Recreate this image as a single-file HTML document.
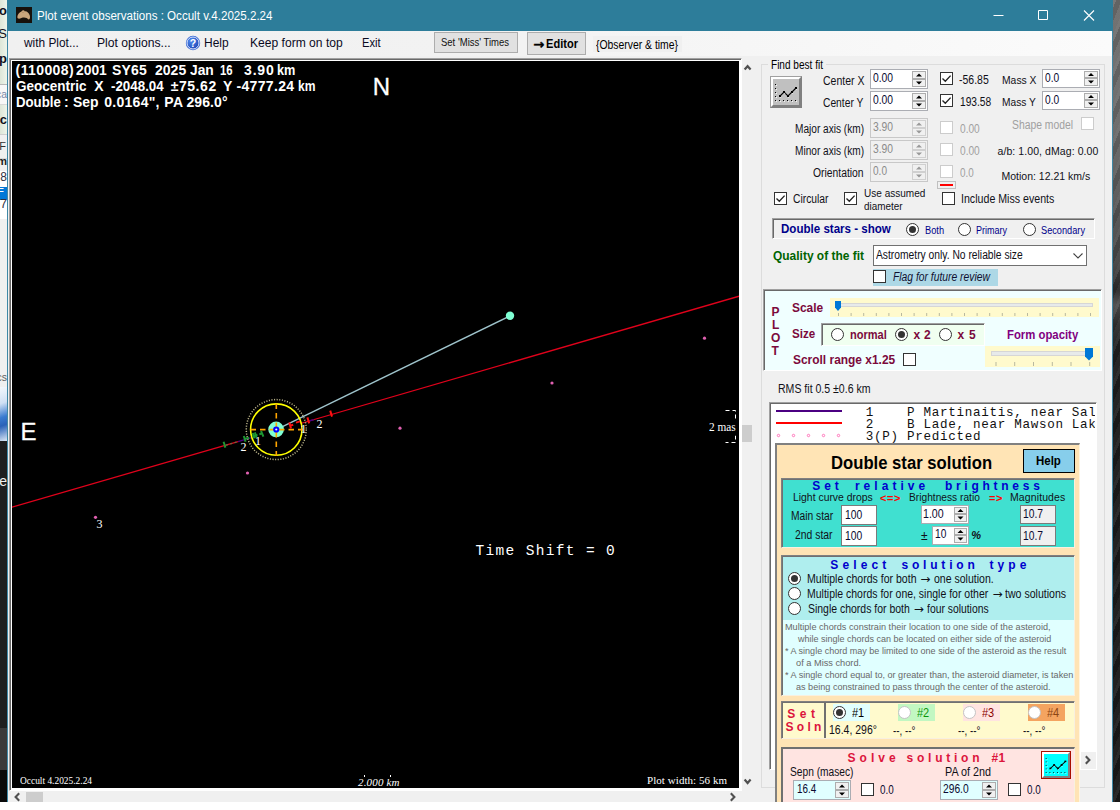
<!DOCTYPE html>
<html lang="en"><head><meta charset="utf-8"><title>Plot event observations : Occult v.4.2025.2.24</title>
<style>
html,body{margin:0;padding:0;}
body{width:1120px;height:810px;position:relative;overflow:hidden;background:#fff;font-family:"Liberation Sans", sans-serif;}
div{position:absolute;box-sizing:border-box;}
svg{position:absolute;overflow:visible;}
.t{position:absolute;white-space:pre;line-height:normal;transform-origin:0 0;}

.cb{width:13px;height:13px;background:#fff;border:1px solid #333;}
.cb.dis{border-color:#ccc;}
.rb.dis{border-color:#c4c4c4;}
.rb{width:13px;height:13px;background:#fff;border:1px solid #333;border-radius:50%;}
.rb.on::after{content:"";position:absolute;left:2px;top:2px;width:7px;height:7px;border-radius:50%;background:#333;}
.nud{background:#fff;border:1px solid #abadb3;}
.nud.dis{background:#f0f0f0;border-color:#c8c8c8;}
.spin{width:14px;background:#f0f0f0;border:1px solid #adadad;}
.spin.dis{border-color:#d0d0d0;}

</style></head><body>
<div style="left:0px;top:0px;width:7px;height:84px;background:linear-gradient(90deg,#dde6d8 0,#eef4ea 100%);"></div>
<div style="left:0px;top:84px;width:7px;height:21px;background:#f7f7f7;border-top:1px solid #b8b8b8;border-bottom:1px solid #d8d8d8;"></div>
<div style="left:0px;top:105px;width:7px;height:29px;background:linear-gradient(90deg,#dde6d8 0,#eef4ea 100%);"></div>
<div style="left:0px;top:134px;width:7px;height:24px;background:#f0f0f0;border-top:1px solid #cfcfcf;"></div>
<div style="left:0px;top:158px;width:7px;height:13px;background:#f0f0f0;border-top:1px solid #d8d8d8;"></div>
<div style="left:0px;top:171px;width:7px;height:48px;background:#ffffff;"></div>
<div style="left:0px;top:187px;width:7px;height:13px;background:#0078d7;"></div>
<div style="left:0px;top:219px;width:7px;height:168px;background:#f0f0f0;"></div>
<div style="left:0px;top:387px;width:7px;height:54px;background:linear-gradient(160deg,#f4f8fc 0,#cfe0f4 30%,#3a7bd0 55%,#2a62b8 70%,#dce8f6 100%);"></div>
<div style="left:0px;top:441px;width:7px;height:287px;background:#1f1f1f;"></div>
<div style="left:0px;top:728px;width:7px;height:42px;background:#3a3a3a;"></div>
<div style="left:0px;top:770px;width:7px;height:32px;background:#0a0a0a;"></div>
<div style="left:0;top:2.5px;width:7px;height:20px;overflow:hidden"><span style="position:absolute;right:0px;top:0;line-height:20px;white-space:pre;font:bold 13px 'Liberation Sans',sans-serif;color:#101020">to</span></div>
<div style="left:0;top:25.5px;width:7px;height:20px;overflow:hidden"><span style="position:absolute;right:0px;top:0;line-height:20px;white-space:pre;font:normal 13px 'Liberation Sans',sans-serif;color:#101020">S</span></div>
<div style="left:0;top:51px;width:7px;height:20px;overflow:hidden"><span style="position:absolute;right:0px;top:0;line-height:20px;white-space:pre;font:bold 13px 'Liberation Sans',sans-serif;color:#101020">sp</span></div>
<div style="left:0;top:87.5px;width:7px;height:20px;overflow:hidden"><span style="position:absolute;right:0px;top:0;line-height:20px;white-space:pre;font:normal 10.5px 'Liberation Sans',sans-serif;color:#7a8aa8">ca</span></div>
<div style="left:0;top:112px;width:7px;height:20px;overflow:hidden"><span style="position:absolute;right:0px;top:0;line-height:20px;white-space:pre;font:bold 13px 'Liberation Sans',sans-serif;color:#101020">sc</span></div>
<div style="left:0;top:139.5px;width:7px;height:20px;overflow:hidden"><span style="position:absolute;right:1px;top:0;line-height:20px;white-space:pre;font:normal 11px 'Liberation Sans',sans-serif;color:#303030">F</span></div>
<div style="left:0;top:154.5px;width:7px;height:20px;overflow:hidden"><span style="position:absolute;right:0px;top:0;line-height:20px;white-space:pre;font:bold 11px 'Liberation Sans',sans-serif;color:#202020">m</span></div>
<div style="left:0;top:169.5px;width:7px;height:20px;overflow:hidden"><span style="position:absolute;right:0px;top:0;line-height:20px;white-space:pre;font:normal 12px 'Liberation Sans',sans-serif;color:#303040">.8</span></div>
<div style="left:0;top:183.5px;width:7px;height:20px;overflow:hidden"><span style="position:absolute;right:3px;top:0;line-height:20px;white-space:pre;font:normal 11px 'Liberation Sans',sans-serif;color:#ffffff">=</span></div>
<div style="left:0;top:197px;width:7px;height:20px;overflow:hidden"><span style="position:absolute;right:0px;top:0;line-height:20px;white-space:pre;font:normal 12px 'Liberation Sans',sans-serif;color:#303040">.7</span></div>
<div style="left:0;top:370.5px;width:7px;height:20px;overflow:hidden"><span style="position:absolute;right:0px;top:0;line-height:20px;white-space:pre;font:normal 10.5px 'Liberation Sans',sans-serif;color:#606060">cs</span></div>
<div style="left:0;top:473px;width:7px;height:20px;overflow:hidden"><span style="position:absolute;right:0px;top:0;line-height:20px;white-space:pre;font:normal 14px 'Liberation Sans',sans-serif;color:#f0f0f0">Re</span></div>
<div style="left:1113px;top:0px;width:7px;height:802px;background:repeating-linear-gradient(112deg,rgba(255,255,255,.07) 0,rgba(255,255,255,.07) 3px,rgba(0,0,0,.10) 3px,rgba(0,0,0,.10) 8px,rgba(255,255,255,.03) 8px,rgba(255,255,255,.03) 13px),linear-gradient(180deg,#6e6e6e 0,#6a6a6a 120px,#585858 200px,#454545 262px,#2c2c2c 290px,#4c4c4c 305px,#303030 325px,#202020 345px,#1c1c1c 420px,#191919 802px);"></div>
<div style="left:7px;top:0px;width:1106px;height:802px;background:#f0f0f0;border-left:1px solid #3f88a6;border-right:1px solid #3f88a6;"></div>
<div style="left:7px;top:0px;width:1106px;height:31px;background:#2d7d9a;"></div>
<div style="left:16px;top:7px;width:16px;height:16px;background:#17110c;"><svg width="16" height="16" viewBox="0 0 16 16" style="left:0;top:0"><path d="M1.5 11 C1 8 3 5.5 5.5 4.5 C6.5 3 8 3 8.8 4.2 C10.5 3.8 13 5.5 13.8 8.5 C14.3 10.5 14 12.5 12.5 12.6 C11.5 11 9 10.2 7 10.6 C5 11 3 12.5 1.5 11 Z" fill="#c9a57c"/><path d="M5.5 4.5 C6.5 6 7.5 6 8.8 4.2" fill="none" stroke="#a9855f" stroke-width="0.6"/></svg></div>
<svg width="140" height="31" style="left:973px;top:0"><path d="M20.5 15.5 H30.5" stroke="#fff" stroke-width="1"/><path d="M65.5 10.5 H74.5 V19.5 H65.5 Z" fill="none" stroke="#fff" stroke-width="1"/><path d="M111 10.5 L121 20.5 M121 10.5 L111 20.5" stroke="#fff" stroke-width="1.1"/></svg>
<div style="left:8px;top:31px;width:1104px;height:25px;background:linear-gradient(90deg,#f0f0f0 0,#f2f2f2 40%,#fbfbfb 100%);"></div>
<svg width="16" height="16" viewBox="0 0 16 16" style="left:185px;top:35px"><defs><radialGradient id="hg" cx="0.35" cy="0.3" r="0.85"><stop offset="0" stop-color="#4f8cf0"/><stop offset="1" stop-color="#1a3fb0"/></radialGradient></defs><circle cx="8" cy="8" r="7.2" fill="#2f62d2"/><circle cx="8" cy="8" r="6" fill="url(#hg)" stroke="#eef3ff" stroke-width="0.9"/><text x="8" y="11.8" text-anchor="middle" font-family="Liberation Sans, sans-serif" font-weight="bold" font-size="10.5" fill="#fff">?</text></svg>
<div style="left:434px;top:32px;width:84px;height:21px;background:#e1e1e1;border:1px solid #adadad;"></div>
<div style="left:527px;top:32px;width:59px;height:23px;background:#e1e1e1;border:1px solid #adadad;"></div>
<div style="left:593px;top:36px;width:89px;height:16px;background:#f0f0f0;"></div>
<div style="left:9px;top:58px;width:733px;height:733px;background:#000;border:1px solid;border-color:#a0a0a0 #fff #fff #a0a0a0;box-shadow:inset 1px 1px 0 #696969, inset -1px -1px 0 #fff;"></div>
<div style="left:11px;top:60px;width:729px;height:729px;background:#000;border:1px solid #fff;"></div>

<svg width="727" height="727" viewBox="12 61 727 727" style="left:12px;top:61px;overflow:hidden">
 <rect x="12" y="61" width="727" height="727" fill="#000"/>
 <line x1="12" y1="507.2" x2="238" y2="441.6" stroke="#e0021b" stroke-width="1.3"/>
 <line x1="300.5" y1="423.5" x2="739" y2="296.2" stroke="#e0021b" stroke-width="1.3"/>
 <line x1="226" y1="445.1" x2="238" y2="441.6" stroke="#6a6a40" stroke-width="1.3" stroke-dasharray="2 2.5"/>
 <g stroke="#4b0082" stroke-width="1.4"><line x1="238" y1="441.6" x2="251.5" y2="437.7"/><line x1="309" y1="421" x2="314" y2="419.6"/></g>
 <g fill="#e060b0">
  <circle cx="95.5" cy="517.3" r="1.6"/><circle cx="247.5" cy="473" r="1.6"/><circle cx="400" cy="428.2" r="1.6"/><circle cx="552" cy="383" r="1.6"/><circle cx="704.5" cy="338.2" r="1.6"/>
 </g>
 <line x1="276.3" y1="429.6" x2="510" y2="316" stroke="#9fc4cc" stroke-width="1.4"/>
 <circle cx="510" cy="315.7" r="4.2" fill="#7fffd4"/>
 <circle cx="276.3" cy="429.6" r="30" fill="none" stroke="#bdb68a" stroke-width="1.5" stroke-dasharray="1.1 1.52"/>
 <circle cx="276.3" cy="429.6" r="25.7" fill="none" stroke="#ffff00" stroke-width="1.6"/>
 <circle cx="276.1" cy="429.4" r="7.8" fill="#7fffd4"/>
 <g stroke="#ffa500" stroke-width="1.6" stroke-dasharray="5.5 4">
  <line x1="276.3" y1="403.5" x2="276.3" y2="456"/>
  <line x1="250.5" y1="429.6" x2="303" y2="429.6"/>
 </g>
 <circle cx="276.25" cy="429.5" r="2.1" fill="#e8f0ff" stroke="#0000ff" stroke-width="2"/>
 <g stroke="#1e9632" stroke-width="2">
  <line x1="223.6" y1="441.8" x2="225.4" y2="447.6"/>
  <line x1="243.8" y1="436" x2="245.6" y2="441.8"/><line x1="244.7" y1="438.9" x2="249" y2="437.7"/>
  <line x1="252.8" y1="433" x2="254.4" y2="438.4"/><line x1="254.9" y1="432.4" x2="256.5" y2="437.8"/><line x1="252.5" y1="436.2" x2="257.5" y2="434.8"/>
  <line x1="261" y1="431" x2="263.4" y2="436.6"/><line x1="262.2" y1="433.3" x2="259.3" y2="434.4"/>
 </g>
 <g stroke="#ff1010" stroke-width="2">
  <line x1="289.3" y1="422.6" x2="291" y2="428.6"/><line x1="290.2" y1="425.6" x2="293.2" y2="424.7"/>
  <line x1="296" y1="422.6" x2="300" y2="421.4"/>
  <line x1="307.4" y1="417.4" x2="309.2" y2="423.4"/><line x1="330.2" y1="410.6" x2="332" y2="416.6"/>
 </g>
 <g stroke="#fff" stroke-width="1" fill="none" stroke-dasharray="4 3">
  <path d="M725.5 410.5 H735.5 V442.5 H725.5"/>
 </g>
 <rect x="706" y="419" width="33" height="16.5" fill="#000"/>
 <g fill="#fff"><rect x="364" y="775" width="1" height="2"/><rect x="390" y="775" width="1" height="2"/></g>
</svg>
<svg width="10" height="8" style="left:743px;top:63px"><path d="M1.6 6.6 L4.6 3.2 L7.6 6.6" fill="none" stroke="#505050" stroke-width="2.2"/></svg>
<svg width="10" height="8" style="left:743px;top:778px"><path d="M1.6 1.6 L4.6 5 L7.6 1.6" fill="none" stroke="#505050" stroke-width="2.2"/></svg>
<div style="left:742px;top:425px;width:10px;height:17px;background:#cdcdcd;"></div>
<svg width="8" height="10" style="left:13px;top:792px"><path d="M6.2 1.3 L2.6 5 L6.2 8.7" fill="none" stroke="#505050" stroke-width="2.1"/></svg>
<svg width="8" height="10" style="left:729px;top:792px"><path d="M1.8 1.3 L5.4 5 L1.8 8.7" fill="none" stroke="#505050" stroke-width="2.1"/></svg>
<div style="left:26px;top:792px;width:17px;height:10px;background:#cdcdcd;"></div>
<div style="left:761px;top:64px;width:344px;height:724px;border:1px solid #dcdcdc;"></div>
<div style="left:768px;top:58px;width:58px;height:14px;background:#f0f0f0;"></div>
<div style="left:770px;top:76px;width:32px;height:32px;background:#c0c0c0;border:1px solid;border-color:#a0a0a0 #808080 #808080 #a0a0a0;"><div style="left:0;top:0;width:30px;height:30px;border:2px solid;border-color:#fff #808080 #808080 #fff"></div><svg width="32" height="32" viewBox="0 0 32 32" preserveAspectRatio="none" style="left:-1px;top:-1px"><rect x="5" y="8" width="1" height="1" fill="#000"/><rect x="6" y="9" width="1" height="1" fill="#fff" opacity="0.8"/><rect x="5" y="12" width="1" height="1" fill="#000"/><rect x="6" y="13" width="1" height="1" fill="#fff" opacity="0.8"/><rect x="5" y="16" width="1" height="1" fill="#000"/><rect x="6" y="17" width="1" height="1" fill="#fff" opacity="0.8"/><rect x="5" y="20" width="1" height="1" fill="#000"/><rect x="6" y="21" width="1" height="1" fill="#fff" opacity="0.8"/><rect x="5" y="24" width="1" height="1" fill="#000"/><rect x="6" y="25" width="1" height="1" fill="#fff" opacity="0.8"/><rect x="9" y="24" width="1" height="1" fill="#000"/><rect x="10" y="25" width="1" height="1" fill="#fff" opacity="0.8"/><rect x="13" y="24" width="1" height="1" fill="#000"/><rect x="14" y="25" width="1" height="1" fill="#fff" opacity="0.8"/><rect x="17" y="24" width="1" height="1" fill="#000"/><rect x="18" y="25" width="1" height="1" fill="#fff" opacity="0.8"/><rect x="21" y="24" width="1" height="1" fill="#000"/><rect x="22" y="25" width="1" height="1" fill="#fff" opacity="0.8"/><rect x="25" y="24" width="1" height="1" fill="#000"/><rect x="26" y="25" width="1" height="1" fill="#fff" opacity="0.8"/><path d="M10 20 L14 16 L18 20 L22 16 L26 12" fill="none" stroke="#000" stroke-width="1.1"/><rect x="9" y="19" width="2" height="2" fill="#000"/><rect x="10" y="21" width="1.2" height="0.8" fill="#fff" opacity="0.7"/><rect x="13" y="15" width="2" height="2" fill="#000"/><rect x="14" y="17" width="1.2" height="0.8" fill="#fff" opacity="0.7"/><rect x="17" y="19" width="2" height="2" fill="#000"/><rect x="18" y="21" width="1.2" height="0.8" fill="#fff" opacity="0.7"/><rect x="21" y="15" width="2" height="2" fill="#000"/><rect x="22" y="17" width="1.2" height="0.8" fill="#fff" opacity="0.7"/><rect x="25" y="11" width="2" height="2" fill="#000"/><rect x="26" y="13" width="1.2" height="0.8" fill="#fff" opacity="0.7"/></svg></div>
<div class="nud" style="left:870px;top:69px;width:58px;height:20px;"><div class="spin" style="left:41px;top:1px;width:14px;height:8px"></div><div class="spin" style="left:41px;top:9px;width:14px;height:8px"></div><svg width="14" height="16" style="left:41px;top:1px"><path d="M4.0 5.5 L7.0 2.5 L10.0 5.5 Z M4.0 10.5 L7.0 13.5 L10.0 10.5 Z" fill="#000"/></svg></div>
<div class="nud" style="left:870px;top:91px;width:58px;height:20px;"><div class="spin" style="left:41px;top:1px;width:14px;height:8px"></div><div class="spin" style="left:41px;top:9px;width:14px;height:8px"></div><svg width="14" height="16" style="left:41px;top:1px"><path d="M4.0 5.5 L7.0 2.5 L10.0 5.5 Z M4.0 10.5 L7.0 13.5 L10.0 10.5 Z" fill="#000"/></svg></div>
<div class="nud dis" style="left:870px;top:118px;width:58px;height:20px;"><div class="spin dis" style="left:41px;top:1px;width:14px;height:8px"></div><div class="spin dis" style="left:41px;top:9px;width:14px;height:8px"></div><svg width="14" height="16" style="left:41px;top:1px"><path d="M4.0 5.5 L7.0 2.5 L10.0 5.5 Z M4.0 10.5 L7.0 13.5 L10.0 10.5 Z" fill="#999"/></svg></div>
<div class="nud dis" style="left:870px;top:140px;width:58px;height:20px;"><div class="spin dis" style="left:41px;top:1px;width:14px;height:8px"></div><div class="spin dis" style="left:41px;top:9px;width:14px;height:8px"></div><svg width="14" height="16" style="left:41px;top:1px"><path d="M4.0 5.5 L7.0 2.5 L10.0 5.5 Z M4.0 10.5 L7.0 13.5 L10.0 10.5 Z" fill="#999"/></svg></div>
<div class="nud dis" style="left:870px;top:162px;width:58px;height:20px;"><div class="spin dis" style="left:41px;top:1px;width:14px;height:8px"></div><div class="spin dis" style="left:41px;top:9px;width:14px;height:8px"></div><svg width="14" height="16" style="left:41px;top:1px"><path d="M4.0 5.5 L7.0 2.5 L10.0 5.5 Z M4.0 10.5 L7.0 13.5 L10.0 10.5 Z" fill="#999"/></svg></div>
<div class="cb" style="left:940px;top:72px"><svg width="11" height="11" viewBox="0 0 11 11" style="left:0;top:0"><path d="M1.5 5.5 L4.3 8.3 L9.6 2.6" fill="none" stroke="#222" stroke-width="1.35"/></svg></div>
<div class="cb" style="left:940px;top:94px"><svg width="11" height="11" viewBox="0 0 11 11" style="left:0;top:0"><path d="M1.5 5.5 L4.3 8.3 L9.6 2.6" fill="none" stroke="#222" stroke-width="1.35"/></svg></div>
<div class="cb dis" style="left:940px;top:121px"></div>
<div class="cb dis" style="left:940px;top:143px"></div>
<div class="cb dis" style="left:940px;top:165px"></div>
<div class="nud" style="left:1042px;top:69px;width:58px;height:19px;"><div class="spin" style="left:41px;top:1px;width:14px;height:7px"></div><div class="spin" style="left:41px;top:8px;width:14px;height:8px"></div><svg width="14" height="15" style="left:41px;top:1px"><path d="M4.0 5.0 L7.0 2.0 L10.0 5.0 Z M4.0 9.5 L7.0 12.5 L10.0 9.5 Z" fill="#000"/></svg></div>
<div class="nud" style="left:1042px;top:91px;width:58px;height:19px;"><div class="spin" style="left:41px;top:1px;width:14px;height:7px"></div><div class="spin" style="left:41px;top:8px;width:14px;height:8px"></div><svg width="14" height="15" style="left:41px;top:1px"><path d="M4.0 5.0 L7.0 2.0 L10.0 5.0 Z M4.0 9.5 L7.0 12.5 L10.0 9.5 Z" fill="#000"/></svg></div>
<div class="cb dis" style="left:1081px;top:117px"></div>
<div style="left:937px;top:181px;width:19px;height:8px;background:#f0f0f0;border:1px solid #c0c0c0;"></div>
<div style="left:940px;top:184px;width:13px;height:2px;background:#ff0000;"></div>
<div class="cb" style="left:774px;top:192px"><svg width="11" height="11" viewBox="0 0 11 11" style="left:0;top:0"><path d="M1.5 5.5 L4.3 8.3 L9.6 2.6" fill="none" stroke="#222" stroke-width="1.35"/></svg></div>
<div class="cb" style="left:844px;top:192px"><svg width="11" height="11" viewBox="0 0 11 11" style="left:0;top:0"><path d="M1.5 5.5 L4.3 8.3 L9.6 2.6" fill="none" stroke="#222" stroke-width="1.35"/></svg></div>
<div class="cb" style="left:942px;top:192px"></div>
<div style="left:772px;top:218px;width:323px;height:21px;background:#f0f0f0;border:1px solid;border-color:#a0a0a0 #fff #fff #a0a0a0;box-shadow:inset 1px 1px 0 #696969;"></div>
<div class="rb on" style="left:906px;top:223px"></div>
<div class="rb" style="left:958px;top:223px"></div>
<div class="rb" style="left:1023px;top:223px"></div>
<div style="left:873px;top:245px;width:214px;height:21px;background:#fff;border:1px solid #707070;"></div>
<svg width="12" height="8" style="left:1072px;top:252px"><path d="M1.5 1.5 L6 6 L10.5 1.5" fill="none" stroke="#404040" stroke-width="1.1"/></svg>
<div style="left:873px;top:269px;width:125px;height:17px;background:#add8e6;"></div>
<div class="cb" style="left:873px;top:270px"></div>
<div style="left:763px;top:289px;width:339px;height:82px;background:#f0ffff;border:1px solid;border-color:#a0a0a0 #fff #fff #a0a0a0;box-shadow:inset 1px 1px 0 #696969;"></div>
<div class="cb" style="left:903px;top:353px"></div>
<div style="left:830px;top:298px;width:269px;height:19px;background:#fffacd;"></div>
<div style="left:836px;top:303px;width:257px;height:4px;background:#e7eaea;border:1px solid #d6d6d6;"></div>
<svg width="269" height="4" style="left:830px;top:313px"><rect x="8.0" y="0" width="1" height="3" fill="#b8b8a0"/><rect x="20.6" y="0" width="1" height="3" fill="#b8b8a0"/><rect x="33.2" y="0" width="1" height="3" fill="#b8b8a0"/><rect x="45.8" y="0" width="1" height="3" fill="#b8b8a0"/><rect x="58.4" y="0" width="1" height="3" fill="#b8b8a0"/><rect x="71.0" y="0" width="1" height="3" fill="#b8b8a0"/><rect x="83.6" y="0" width="1" height="3" fill="#b8b8a0"/><rect x="96.2" y="0" width="1" height="3" fill="#b8b8a0"/><rect x="108.8" y="0" width="1" height="3" fill="#b8b8a0"/><rect x="121.4" y="0" width="1" height="3" fill="#b8b8a0"/><rect x="134.0" y="0" width="1" height="3" fill="#b8b8a0"/><rect x="146.6" y="0" width="1" height="3" fill="#b8b8a0"/><rect x="159.2" y="0" width="1" height="3" fill="#b8b8a0"/><rect x="171.8" y="0" width="1" height="3" fill="#b8b8a0"/><rect x="184.4" y="0" width="1" height="3" fill="#b8b8a0"/><rect x="197.0" y="0" width="1" height="3" fill="#b8b8a0"/><rect x="209.6" y="0" width="1" height="3" fill="#b8b8a0"/><rect x="222.2" y="0" width="1" height="3" fill="#b8b8a0"/><rect x="234.8" y="0" width="1" height="3" fill="#b8b8a0"/><rect x="247.4" y="0" width="1" height="3" fill="#b8b8a0"/><rect x="260.0" y="0" width="1" height="3" fill="#b8b8a0"/></svg>
<svg width="8" height="13" style="left:835px;top:301px"><path d="M0 0 H6 V6.5 L3 10 L0 6.5 Z" fill="#0078d7"/></svg>
<div style="left:821px;top:323px;width:164px;height:23px;background:#f0fff0;border:1px solid;border-color:#a0a0a0 #fff #fff #a0a0a0;box-shadow:inset 1px 1px 0 #696969;"></div>
<div class="rb" style="left:831px;top:328px"></div>
<div class="rb on" style="left:895px;top:328px"></div>
<div class="rb" style="left:939px;top:328px"></div>
<div style="left:985px;top:346px;width:115px;height:21px;background:#fffacd;"></div>
<div style="left:991px;top:351px;width:102px;height:5px;background:#e7eaea;border:1px solid #d6d6d6;"></div>
<svg width="115" height="4" style="left:985px;top:362px"><rect x="10.5" y="0" width="1" height="4" fill="#b8b8a0"/><rect x="29.2" y="0" width="1" height="4" fill="#b8b8a0"/><rect x="48.0" y="0" width="1" height="4" fill="#b8b8a0"/><rect x="66.8" y="0" width="1" height="4" fill="#b8b8a0"/><rect x="85.5" y="0" width="1" height="4" fill="#b8b8a0"/><rect x="104.2" y="0" width="1" height="4" fill="#b8b8a0"/></svg>
<svg width="9" height="13" style="left:1085px;top:348px"><path d="M0 0 H8 V8.5 L4 12.5 L0 8.5 Z" fill="#0078d7"/></svg>
<div style="left:769px;top:402px;width:328px;height:368px;background:#fff;border:1px solid;border-color:#a0a0a0 #fff #fff #a0a0a0;box-shadow:inset 1px 1px 0 #696969;"></div>
<div style="left:1081px;top:752px;width:15px;height:17px;background:#f0f0f0;"></div>
<svg width="8" height="10" style="left:1084px;top:755px"><path d="M1.8 1.3 L5.4 5 L1.8 8.7" fill="none" stroke="#505050" stroke-width="2.1"/></svg>
<div style="left:776px;top:410px;width:66px;height:2px;background:#4b0082;"></div>
<div style="left:776px;top:422px;width:66px;height:2px;background:#ff0000;"></div>
<svg width="70" height="5" style="left:776px;top:433px"><circle cx="2.5" cy="2.5" r="1.2" fill="none" stroke="#ff69b4" stroke-width="0.9"/><circle cx="17.5" cy="2.5" r="1.2" fill="none" stroke="#ff69b4" stroke-width="0.9"/><circle cx="32.5" cy="2.5" r="1.2" fill="none" stroke="#ff69b4" stroke-width="0.9"/><circle cx="47.5" cy="2.5" r="1.2" fill="none" stroke="#ff69b4" stroke-width="0.9"/><circle cx="62.5" cy="2.5" r="1.2" fill="none" stroke="#ff69b4" stroke-width="0.9"/></svg>
<div style="left:775px;top:443px;width:305px;height:359px;background:#ffe4b5;border-top:2px solid #808080;border-left:2px solid #808080;border-right:1px solid #fff5e0;"></div>
<div style="left:1023px;top:449px;width:52px;height:24px;background:#87ceeb;border:1px solid #000;"></div>
<div style="left:781px;top:478px;width:294px;height:70px;background:#40e0d0;border:1px solid;border-color:#808080 #f8f0e0 #f8f0e0 #808080;box-shadow:inset 1px 1px 0 #707070;"></div>
<div style="left:841px;top:505px;width:36px;height:20px;background:#fff;border:1px solid #7a7a7a;"></div>
<div style="left:841px;top:526px;width:36px;height:20px;background:#fff;border:1px solid #7a7a7a;"></div>
<div class="nud" style="left:921px;top:505px;width:48px;height:19px;"><div class="spin" style="left:32px;top:1px;width:13px;height:7px"></div><div class="spin" style="left:32px;top:8px;width:13px;height:8px"></div><svg width="13" height="15" style="left:32px;top:1px"><path d="M3.5 5.0 L6.5 2.0 L9.5 5.0 Z M3.5 9.5 L6.5 12.5 L9.5 9.5 Z" fill="#000"/></svg></div>
<div class="nud" style="left:932px;top:526px;width:37px;height:19px;"><div class="spin" style="left:21px;top:1px;width:13px;height:7px"></div><div class="spin" style="left:21px;top:8px;width:13px;height:8px"></div><svg width="13" height="15" style="left:21px;top:1px"><path d="M3.5 5.0 L6.5 2.0 L9.5 5.0 Z M3.5 9.5 L6.5 12.5 L9.5 9.5 Z" fill="#000"/></svg></div>
<div style="left:1020px;top:505px;width:36px;height:19px;background:#f0f0f0;border:1px solid #7a7a7a;"></div>
<div style="left:1020px;top:526px;width:36px;height:20px;background:#f0f0f0;border:1px solid #7a7a7a;"></div>
<div style="left:781px;top:555px;width:294px;height:141px;background:#afeeee;border:1px solid;border-color:#808080 #f8f0e0 #f8f0e0 #808080;box-shadow:inset 1px 1px 0 #707070;"></div>
<div style="left:783px;top:620px;width:291px;height:75px;background:#e0ffff;"></div>
<div class="rb on" style="left:788px;top:572px"></div>
<div class="rb" style="left:788px;top:587px"></div>
<div class="rb" style="left:788px;top:602px"></div>
<div style="left:781px;top:701px;width:294px;height:38px;background:#fffacd;border:1px solid;border-color:#808080 #f8f0e0 #f8f0e0 #808080;box-shadow:inset 1px 1px 0 #707070;"></div>
<div style="left:824px;top:703px;width:2px;height:35px;background:#707070;"></div>
<div style="left:833px;top:704px;width:37px;height:17px;background:#e0ffff;"></div>
<div class="rb on" style="left:833px;top:706px"></div>
<div style="left:898px;top:704px;width:37px;height:17px;background:#c2f7c2;"></div>
<div class="rb dis" style="left:898px;top:706px"></div>
<div style="left:963px;top:704px;width:37px;height:17px;background:#ffe4e1;"></div>
<div class="rb dis" style="left:963px;top:706px"></div>
<div style="left:1028px;top:704px;width:37px;height:17px;background:#f4a460;"></div>
<div class="rb dis" style="left:1028px;top:706px"></div>
<div style="left:781px;top:747px;width:294px;height:55px;background:#ffe4e1;border-top:2px solid #707070;border-left:2px solid #707070;border-right:1px solid #f8f0e0;"></div>
<div class="nud" style="left:793px;top:780px;width:58px;height:20px;background:#e0ffff;"><div class="spin" style="left:41px;top:1px;width:14px;height:8px"></div><div class="spin" style="left:41px;top:9px;width:14px;height:8px"></div><svg width="14" height="16" style="left:41px;top:1px"><path d="M4.0 5.5 L7.0 2.5 L10.0 5.5 Z M4.0 10.5 L7.0 13.5 L10.0 10.5 Z" fill="#000"/></svg></div>
<div class="cb" style="left:861px;top:783px"></div>
<div class="nud" style="left:940px;top:780px;width:58px;height:20px;background:#e0ffff;"><div class="spin" style="left:41px;top:1px;width:14px;height:8px"></div><div class="spin" style="left:41px;top:9px;width:14px;height:8px"></div><svg width="14" height="16" style="left:41px;top:1px"><path d="M4.0 5.5 L7.0 2.5 L10.0 5.5 Z M4.0 10.5 L7.0 13.5 L10.0 10.5 Z" fill="#000"/></svg></div>
<div class="cb" style="left:1008px;top:783px"></div>
<div style="left:1041px;top:751px;width:30px;height:28px;background:#00ffff;border:1px solid #a81000;"><div style="left:0;top:0;width:28px;height:26px;border:2px solid;border-color:#fff #808080 #808080 #fff"></div><svg width="30" height="28" viewBox="0 0 32 32" preserveAspectRatio="none" style="left:-1px;top:-1px"><rect x="5" y="8" width="1" height="1" fill="#000"/><rect x="6" y="9" width="1" height="1" fill="#fff" opacity="0.8"/><rect x="5" y="12" width="1" height="1" fill="#000"/><rect x="6" y="13" width="1" height="1" fill="#fff" opacity="0.8"/><rect x="5" y="16" width="1" height="1" fill="#000"/><rect x="6" y="17" width="1" height="1" fill="#fff" opacity="0.8"/><rect x="5" y="20" width="1" height="1" fill="#000"/><rect x="6" y="21" width="1" height="1" fill="#fff" opacity="0.8"/><rect x="5" y="24" width="1" height="1" fill="#000"/><rect x="6" y="25" width="1" height="1" fill="#fff" opacity="0.8"/><rect x="9" y="24" width="1" height="1" fill="#000"/><rect x="10" y="25" width="1" height="1" fill="#fff" opacity="0.8"/><rect x="13" y="24" width="1" height="1" fill="#000"/><rect x="14" y="25" width="1" height="1" fill="#fff" opacity="0.8"/><rect x="17" y="24" width="1" height="1" fill="#000"/><rect x="18" y="25" width="1" height="1" fill="#fff" opacity="0.8"/><rect x="21" y="24" width="1" height="1" fill="#000"/><rect x="22" y="25" width="1" height="1" fill="#fff" opacity="0.8"/><rect x="25" y="24" width="1" height="1" fill="#000"/><rect x="26" y="25" width="1" height="1" fill="#fff" opacity="0.8"/><path d="M10 20 L14 16 L18 20 L22 16 L26 12" fill="none" stroke="#000" stroke-width="1.1"/><rect x="9" y="19" width="2" height="2" fill="#000"/><rect x="10" y="21" width="1.2" height="0.8" fill="#fff" opacity="0.7"/><rect x="13" y="15" width="2" height="2" fill="#000"/><rect x="14" y="17" width="1.2" height="0.8" fill="#fff" opacity="0.7"/><rect x="17" y="19" width="2" height="2" fill="#000"/><rect x="18" y="21" width="1.2" height="0.8" fill="#fff" opacity="0.7"/><rect x="21" y="15" width="2" height="2" fill="#000"/><rect x="22" y="17" width="1.2" height="0.8" fill="#fff" opacity="0.7"/><rect x="25" y="11" width="2" height="2" fill="#000"/><rect x="26" y="13" width="1.2" height="0.8" fill="#fff" opacity="0.7"/></svg></div>
<div style="left:0px;top:802px;width:1120px;height:8px;background:#fff;"></div>
<span class="t" style="left:37.20px;top:9px;font:normal normal 12px 'Liberation Sans', sans-serif;color:#fff;transform:scaleX(0.9654);">Plot event observations : Occult v.4.2025.2.24</span>
<span class="t" style="left:24.15px;top:36px;font:normal normal 12.5px 'Liberation Sans', sans-serif;color:#0a0a1e;transform:scaleX(0.9504);">with Plot...</span>
<span class="t" style="left:97.23px;top:36px;font:normal normal 12.5px 'Liberation Sans', sans-serif;color:#0a0a1e;transform:scaleX(0.9735);">Plot options...</span>
<span class="t" style="left:203.54px;top:36px;font:normal normal 12.5px 'Liberation Sans', sans-serif;color:#0a0a1e;transform:scaleX(0.9573);">Help</span>
<span class="t" style="left:249.53px;top:36px;font:normal normal 12.5px 'Liberation Sans', sans-serif;color:#0a0a1e;transform:scaleX(0.9669);">Keep form on top</span>
<span class="t" style="left:361.61px;top:36px;font:normal normal 12.5px 'Liberation Sans', sans-serif;color:#0a0a1e;transform:scaleX(0.8937);">Exit</span>
<span class="t" style="left:441.00px;top:36px;font:normal normal 10.5px 'Liberation Sans', sans-serif;color:#111;transform:scaleX(0.9051);">Set &#x27;Miss&#x27; Times</span>
<span class="t" style="left:533.20px;top:37px;font:normal bold 13px 'DejaVu Sans', sans-serif;color:#000;-webkit-text-stroke:0.4px #000;">→</span>
<span class="t" style="left:546.40px;top:36px;font:normal bold 13px 'Liberation Sans', sans-serif;color:#000;transform:scaleX(0.8508);">Editor</span>
<span class="t" style="left:596.00px;top:38px;font:normal normal 12px 'Liberation Sans', sans-serif;color:#000;transform:scaleX(0.8659);">{Observer &amp; time}</span>
<span class="t" style="left:15.60px;top:62px;font:normal bold 14px 'Liberation Sans', sans-serif;color:#fff;letter-spacing:0.385px;">(110008)</span>
<span class="t" style="left:76.00px;top:62px;font:normal bold 14px 'Liberation Sans', sans-serif;color:#fff;transform:scaleX(0.9886);">2001</span>
<span class="t" style="left:112.00px;top:62px;font:normal bold 14px 'Liberation Sans', sans-serif;color:#fff;letter-spacing:0.179px;">SY65</span>
<span class="t" style="left:155.00px;top:62px;font:normal bold 14px 'Liberation Sans', sans-serif;color:#fff;letter-spacing:0.014px;">2025</span>
<span class="t" style="left:190.40px;top:62px;font:normal bold 14px 'Liberation Sans', sans-serif;color:#fff;transform:scaleX(0.9842);">Jan</span>
<span class="t" style="left:219.60px;top:62px;font:normal bold 14px 'Liberation Sans', sans-serif;color:#fff;transform:scaleX(0.8108);">16</span>
<span class="t" style="left:244.00px;top:62px;font:normal bold 14px 'Liberation Sans', sans-serif;color:#fff;letter-spacing:0.846px;">3.90</span>
<span class="t" style="left:277.00px;top:62px;font:normal bold 14px 'Liberation Sans', sans-serif;color:#fff;transform:scaleX(0.9097);">km</span>
<span class="t" style="left:15.70px;top:78px;font:normal bold 14px 'Liberation Sans', sans-serif;color:#fff;transform:scaleX(0.9639);">Geocentric</span>
<span class="t" style="left:94.30px;top:78px;font:normal bold 14px 'Liberation Sans', sans-serif;color:#fff;">X</span>
<span class="t" style="left:110.70px;top:78px;font:normal bold 14px 'Liberation Sans', sans-serif;color:#fff;transform:scaleX(0.9535);">-2048.04</span>
<span class="t" style="left:170.70px;top:78px;font:normal bold 14px 'Liberation Sans', sans-serif;color:#fff;letter-spacing:0.554px;">±75.62</span>
<span class="t" style="left:222.90px;top:78px;font:normal bold 14px 'Liberation Sans', sans-serif;color:#fff;">Y</span>
<span class="t" style="left:236.40px;top:78px;font:normal bold 14px 'Liberation Sans', sans-serif;color:#fff;letter-spacing:0.345px;">-4777.24</span>
<span class="t" style="left:297.90px;top:78px;font:normal bold 14px 'Liberation Sans', sans-serif;color:#fff;transform:scaleX(0.8642);">km</span>
<span class="t" style="left:15.70px;top:94px;font:normal bold 14px 'Liberation Sans', sans-serif;color:#fff;transform:scaleX(0.9443);">Double</span>
<span class="t" style="left:64.00px;top:94px;font:normal bold 14px 'Liberation Sans', sans-serif;color:#fff;">:</span>
<span class="t" style="left:72.90px;top:94px;font:normal bold 14px 'Liberation Sans', sans-serif;color:#fff;transform:scaleX(0.9951);">Sep</span>
<span class="t" style="left:104.30px;top:94px;font:normal bold 14px 'Liberation Sans', sans-serif;color:#fff;letter-spacing:0.263px;">0.0164&quot;,</span>
<span class="t" style="left:164.30px;top:94px;font:normal bold 14px 'Liberation Sans', sans-serif;color:#fff;letter-spacing:0.301px;">PA</span>
<span class="t" style="left:186.40px;top:94px;font:normal bold 14px 'Liberation Sans', sans-serif;color:#fff;letter-spacing:0.113px;">296.0°</span>
<span class="t" style="left:372.80px;top:73px;font:normal normal 24px 'Liberation Sans', sans-serif;color:#fff;-webkit-text-stroke:0.3px #fff;">N</span>
<span class="t" style="left:20.50px;top:418px;font:normal normal 24px 'Liberation Sans', sans-serif;color:#fff;-webkit-text-stroke:0.3px #fff;">E</span>
<span class="t" style="left:475.50px;top:543px;font:normal normal 14.5px 'Liberation Mono', monospace;color:#fff;letter-spacing:1.337px;">Time Shift = 0</span>
<span class="t" style="left:316.50px;top:417px;font:normal normal 12px 'Liberation Serif', serif;color:#fff;">2</span>
<span class="t" style="left:300.50px;top:422px;font:normal normal 12px 'Liberation Serif', serif;color:#fff;">1</span>
<span class="t" style="left:240.50px;top:440px;font:normal normal 12px 'Liberation Serif', serif;color:#fff;">2</span>
<span class="t" style="left:255.00px;top:434px;font:normal normal 12px 'Liberation Serif', serif;color:#fff;">1</span>
<span class="t" style="left:96.50px;top:517px;font:normal normal 12px 'Liberation Serif', serif;color:#fff;">3</span>
<span class="t" style="left:709.00px;top:420px;font:normal normal 12px 'Liberation Serif', serif;color:#fff;transform:scaleX(0.9421);">2 mas</span>
<span class="t" style="left:19.50px;top:774px;font:normal normal 11px 'Liberation Serif', serif;color:#fff;transform:scaleX(0.8547);">Occult 4.2025.2.24</span>
<span class="t" style="left:358.00px;top:776px;font:italic normal 11px 'Liberation Serif', serif;color:#fff;letter-spacing:0.160px;">2.000 km</span>
<span class="t" style="left:647.00px;top:774px;font:normal normal 11px 'Liberation Serif', serif;color:#fff;letter-spacing:0.057px;">Plot width: 56 km</span>
<span class="t" style="left:770.50px;top:58px;font:normal normal 12px 'Liberation Sans', sans-serif;color:#000;transform:scaleX(0.8374);">Find best fit</span>
<span class="t" style="left:822.50px;top:74px;font:normal normal 12px 'Liberation Sans', sans-serif;color:#101018;transform:scaleX(0.8764);">Center X</span>
<span class="t" style="left:822.50px;top:96px;font:normal normal 12px 'Liberation Sans', sans-serif;color:#101018;transform:scaleX(0.8553);">Center Y</span>
<span class="t" style="left:794.50px;top:122px;font:normal normal 12px 'Liberation Sans', sans-serif;color:#101018;transform:scaleX(0.8414);">Major axis (km)</span>
<span class="t" style="left:794.50px;top:144px;font:normal normal 12px 'Liberation Sans', sans-serif;color:#101018;transform:scaleX(0.8414);">Minor axis (km)</span>
<span class="t" style="left:813.00px;top:166px;font:normal normal 12px 'Liberation Sans', sans-serif;color:#101018;transform:scaleX(0.8617);">Orientation</span>
<span class="t" style="left:872.70px;top:70px;font:normal normal 13px 'Liberation Sans', sans-serif;color:#0a0a30;transform:scaleX(0.7937);">0.00</span>
<span class="t" style="left:872.70px;top:92px;font:normal normal 13px 'Liberation Sans', sans-serif;color:#0a0a30;transform:scaleX(0.7937);">0.00</span>
<span class="t" style="left:872.70px;top:119px;font:normal normal 13px 'Liberation Sans', sans-serif;color:#8a8a8a;transform:scaleX(0.7937);">3.90</span>
<span class="t" style="left:872.70px;top:141px;font:normal normal 13px 'Liberation Sans', sans-serif;color:#8a8a8a;transform:scaleX(0.7937);">3.90</span>
<span class="t" style="left:872.70px;top:163px;font:normal normal 13px 'Liberation Sans', sans-serif;color:#8a8a8a;transform:scaleX(0.7735);">0.0</span>
<span class="t" style="left:959.00px;top:73px;font:normal normal 12px 'Liberation Sans', sans-serif;color:#101018;transform:scaleX(0.8733);">-56.85</span>
<span class="t" style="left:960.00px;top:95px;font:normal normal 12px 'Liberation Sans', sans-serif;color:#101018;transform:scaleX(0.8507);">193.58</span>
<span class="t" style="left:959.50px;top:122px;font:normal normal 12px 'Liberation Sans', sans-serif;color:#a0a0a0;transform:scaleX(0.8445);">0.00</span>
<span class="t" style="left:959.50px;top:144px;font:normal normal 12px 'Liberation Sans', sans-serif;color:#a0a0a0;transform:scaleX(0.8445);">0.00</span>
<span class="t" style="left:959.50px;top:166px;font:normal normal 12px 'Liberation Sans', sans-serif;color:#a0a0a0;transform:scaleX(0.8232);">0.0</span>
<span class="t" style="left:1001.50px;top:74px;font:normal normal 10.5px 'Liberation Sans', sans-serif;color:#101018;transform:scaleX(0.9856);">Mass X</span>
<span class="t" style="left:1001.50px;top:96px;font:normal normal 10.5px 'Liberation Sans', sans-serif;color:#101018;transform:scaleX(0.9713);">Mass Y</span>
<span class="t" style="left:1044.50px;top:70px;font:normal normal 13px 'Liberation Sans', sans-serif;color:#0a0a30;transform:scaleX(0.7847);">0.0</span>
<span class="t" style="left:1044.50px;top:92px;font:normal normal 13px 'Liberation Sans', sans-serif;color:#0a0a30;transform:scaleX(0.7847);">0.0</span>
<span class="t" style="left:1011.50px;top:118px;font:normal normal 12px 'Liberation Sans', sans-serif;color:#a0a0a0;transform:scaleX(0.8637);">Shape model</span>
<span class="t" style="left:997.50px;top:145px;font:normal normal 10.5px 'Liberation Sans', sans-serif;color:#101018;letter-spacing:0.080px;">a/b: 1.00, dMag: 0.00</span>
<span class="t" style="left:1001.50px;top:170px;font:normal normal 10.5px 'Liberation Sans', sans-serif;color:#101018;">Motion: 12.21 km/s</span>
<span class="t" style="left:792.50px;top:192px;font:normal normal 12px 'Liberation Sans', sans-serif;color:#101018;transform:scaleX(0.8587);">Circular</span>
<span class="t" style="left:863.50px;top:187px;font:normal normal 10.5px 'Liberation Sans', sans-serif;color:#101018;transform:scaleX(0.9556);">Use assumed</span>
<span class="t" style="left:863.50px;top:200px;font:normal normal 10.5px 'Liberation Sans', sans-serif;color:#101018;transform:scaleX(0.9431);">diameter</span>
<span class="t" style="left:960.61px;top:192px;font:normal normal 12px 'Liberation Sans', sans-serif;color:#101018;transform:scaleX(0.8862);">Include Miss events</span>
<span class="t" style="left:780.50px;top:222px;font:normal bold 12px 'Liberation Sans', sans-serif;color:#00008b;transform:scaleX(0.9635);">Double stars - show</span>
<span class="t" style="left:924.50px;top:225px;font:normal normal 10px 'Liberation Sans', sans-serif;color:#00008b;transform:scaleX(0.9245);">Both</span>
<span class="t" style="left:976.00px;top:225px;font:normal normal 10px 'Liberation Sans', sans-serif;color:#00008b;transform:scaleX(0.9000);">Primary</span>
<span class="t" style="left:1041.00px;top:225px;font:normal normal 10px 'Liberation Sans', sans-serif;color:#00008b;transform:scaleX(0.9204);">Secondary</span>
<span class="t" style="left:772.50px;top:249px;font:normal bold 12px 'Liberation Sans', sans-serif;color:#006400;transform:scaleX(0.9963);">Quality of the fit</span>
<span class="t" style="left:876.00px;top:248px;font:normal normal 12px 'Liberation Sans', sans-serif;color:#101018;transform:scaleX(0.8572);">Astrometry only. No reliable size</span>
<span class="t" style="left:893.00px;top:270px;font:italic normal 12px 'Liberation Sans', sans-serif;color:#101030;transform:scaleX(0.8593);">Flag for future review</span>
<span class="t" style="left:771.50px;top:305px;font:normal bold 12px 'Liberation Sans', sans-serif;color:#7b0a3c;">P</span>
<span class="t" style="left:772.00px;top:318px;font:normal bold 12px 'Liberation Sans', sans-serif;color:#7b0a3c;">L</span>
<span class="t" style="left:771.00px;top:331px;font:normal bold 12px 'Liberation Sans', sans-serif;color:#7b0a3c;">O</span>
<span class="t" style="left:771.50px;top:344px;font:normal bold 12px 'Liberation Sans', sans-serif;color:#7b0a3c;">T</span>
<span class="t" style="left:791.50px;top:301px;font:normal bold 12px 'Liberation Sans', sans-serif;color:#7b0a3c;transform:scaleX(0.9941);">Scale</span>
<span class="t" style="left:791.50px;top:327px;font:normal bold 12px 'Liberation Sans', sans-serif;color:#7b0a3c;transform:scaleX(0.9656);">Size</span>
<span class="t" style="left:792.50px;top:353px;font:normal bold 12px 'Liberation Sans', sans-serif;color:#7b0a3c;transform:scaleX(0.9947);">Scroll range x1.25</span>
<span class="t" style="left:849.50px;top:328px;font:normal bold 12px 'Liberation Sans', sans-serif;color:#7b0a3c;transform:scaleX(0.9200);">normal</span>
<span class="t" style="left:913.50px;top:328px;font:normal bold 12px 'Liberation Sans', sans-serif;color:#7b0a3c;letter-spacing:0.246px;">x 2</span>
<span class="t" style="left:957.50px;top:328px;font:normal bold 12px 'Liberation Sans', sans-serif;color:#7b0a3c;letter-spacing:0.746px;">x 5</span>
<span class="t" style="left:1006.50px;top:328px;font:normal bold 12px 'Liberation Sans', sans-serif;color:#800080;transform:scaleX(0.9449);">Form opacity</span>
<span class="t" style="left:777.50px;top:382px;font:normal normal 12px 'Liberation Sans', sans-serif;color:#101018;transform:scaleX(0.8786);">RMS fit 0.5 ±0.6 km</span>
<span class="t" style="left:865.70px;top:406px;font:normal normal 12.6px 'Liberation Mono', monospace;color:#111;letter-spacing:0.690px;width:229.5px;overflow:hidden;">1    P Martinaitis, near Sal</span>
<span class="t" style="left:865.70px;top:418px;font:normal normal 12.6px 'Liberation Mono', monospace;color:#111;letter-spacing:0.690px;width:229.5px;overflow:hidden;">2    B Lade, near Mawson Lak</span>
<span class="t" style="left:865.70px;top:430px;font:normal normal 12.6px 'Liberation Mono', monospace;color:#111;letter-spacing:0.690px;">3(P) Predicted</span>
<span class="t" style="left:831.05px;top:453px;font:normal bold 17.5px 'Liberation Sans', sans-serif;color:#000;transform:scaleX(0.9523);">Double star solution</span>
<span class="t" style="left:1036.00px;top:454px;font:normal bold 12px 'Liberation Sans', sans-serif;color:#000;transform:scaleX(0.9543);">Help</span>
<span class="t" style="left:812.30px;top:479px;font:normal bold 12px 'Liberation Sans', sans-serif;color:#0000cd;letter-spacing:3.911px;">Set</span>
<span class="t" style="left:854.90px;top:479px;font:normal bold 12px 'Liberation Sans', sans-serif;color:#0000cd;letter-spacing:4.049px;">relative</span>
<span class="t" style="left:944.90px;top:479px;font:normal bold 12px 'Liberation Sans', sans-serif;color:#0000cd;letter-spacing:3.737px;">brightness</span>
<span class="t" style="left:792.50px;top:491px;font:normal normal 10.5px 'Liberation Sans', sans-serif;color:#101018;transform:scaleX(0.9901);">Light curve drops</span>
<span class="t" style="left:880.00px;top:492px;font:normal bold 11px 'Liberation Sans', sans-serif;color:#ff0000;letter-spacing:0.576px;">&lt;=&gt;</span>
<span class="t" style="left:908.50px;top:491px;font:normal normal 10.5px 'Liberation Sans', sans-serif;color:#101018;transform:scaleX(0.9711);">Brightness ratio</span>
<span class="t" style="left:989.00px;top:492px;font:normal bold 11px 'Liberation Sans', sans-serif;color:#ff0000;letter-spacing:0.576px;">=&gt;</span>
<span class="t" style="left:1010.00px;top:491px;font:normal normal 10.5px 'Liberation Sans', sans-serif;color:#101018;letter-spacing:0.107px;">Magnitudes</span>
<span class="t" style="left:790.70px;top:509px;font:normal normal 12px 'Liberation Sans', sans-serif;color:#101018;transform:scaleX(0.8551);">Main star</span>
<span class="t" style="left:795.40px;top:528px;font:normal normal 12px 'Liberation Sans', sans-serif;color:#101018;transform:scaleX(0.8648);">2nd star</span>
<span class="t" style="left:844.80px;top:507px;font:normal normal 13px 'Liberation Sans', sans-serif;color:#0a0a30;transform:scaleX(0.7922);">100</span>
<span class="t" style="left:844.80px;top:528px;font:normal normal 13px 'Liberation Sans', sans-serif;color:#0a0a30;transform:scaleX(0.7922);">100</span>
<span class="t" style="left:923.40px;top:506px;font:normal normal 13px 'Liberation Sans', sans-serif;color:#0a0a30;transform:scaleX(0.8177);">1.00</span>
<span class="t" style="left:921.00px;top:529px;font:normal normal 12px 'Liberation Sans', sans-serif;color:#101018;">±</span>
<span class="t" style="left:934.60px;top:526px;font:normal normal 13px 'Liberation Sans', sans-serif;color:#0a0a30;transform:scaleX(0.7800);">10</span>
<span class="t" style="left:971.30px;top:529px;font:italic bold 11px 'Liberation Sans', sans-serif;color:#101018;">%</span>
<span class="t" style="left:1022.90px;top:506px;font:normal normal 13px 'Liberation Sans', sans-serif;color:#0a0a30;transform:scaleX(0.7897);">10.7</span>
<span class="t" style="left:1022.90px;top:528px;font:normal normal 13px 'Liberation Sans', sans-serif;color:#0a0a30;transform:scaleX(0.7897);">10.7</span>
<span class="t" style="left:830.30px;top:558px;font:normal bold 12px 'Liberation Sans', sans-serif;color:#0000cd;letter-spacing:4.108px;">Select</span>
<span class="t" style="left:901.50px;top:558px;font:normal bold 12px 'Liberation Sans', sans-serif;color:#0000cd;letter-spacing:3.796px;">solution</span>
<span class="t" style="left:989.40px;top:558px;font:normal bold 12px 'Liberation Sans', sans-serif;color:#0000cd;letter-spacing:4.100px;">type</span>
<span class="t" style="left:807.30px;top:572px;font:normal normal 12px 'Liberation Sans', sans-serif;color:#101018;transform:scaleX(0.8778);">Multiple chords for both</span>
<span class="t" style="left:920.20px;top:572px;font:normal normal 12px 'DejaVu Sans', sans-serif;color:#101018;">→</span>
<span class="t" style="left:933.90px;top:572px;font:normal normal 12px 'Liberation Sans', sans-serif;color:#101018;transform:scaleX(0.8772);">one solution.</span>
<span class="t" style="left:807.30px;top:587px;font:normal normal 12px 'Liberation Sans', sans-serif;color:#101018;transform:scaleX(0.8735);">Multiple chords for one, single for other</span>
<span class="t" style="left:992.40px;top:587px;font:normal normal 12px 'DejaVu Sans', sans-serif;color:#101018;">→</span>
<span class="t" style="left:1005.30px;top:587px;font:normal normal 12px 'Liberation Sans', sans-serif;color:#101018;transform:scaleX(0.8808);">two solutions</span>
<span class="t" style="left:807.60px;top:602px;font:normal normal 12px 'Liberation Sans', sans-serif;color:#101018;transform:scaleX(0.8719);">Single chords for both</span>
<span class="t" style="left:913.70px;top:602px;font:normal normal 12px 'DejaVu Sans', sans-serif;color:#101018;">→</span>
<span class="t" style="left:926.50px;top:602px;font:normal normal 12px 'Liberation Sans', sans-serif;color:#101018;transform:scaleX(0.8631);">four solutions</span>
<span class="t" style="left:785.00px;top:621px;font:normal normal 9.5px 'Liberation Sans', sans-serif;color:#686868;transform:scaleX(0.9617);">Multiple chords constrain their location to one side of the asteroid,</span>
<span class="t" style="left:797.95px;top:633px;font:normal normal 9.5px 'Liberation Sans', sans-serif;color:#686868;transform:scaleX(0.9480);">while single chords can be located on either side of the asteroid</span>
<span class="t" style="left:784.50px;top:645px;font:normal normal 9.5px 'Liberation Sans', sans-serif;color:#686868;transform:scaleX(0.9508);">* A single chord may be limited to one side of the asteroid as the result</span>
<span class="t" style="left:796.00px;top:657px;font:normal normal 9.5px 'Liberation Sans', sans-serif;color:#686868;transform:scaleX(0.9712);">of a Miss chord.</span>
<span class="t" style="left:784.50px;top:669px;font:normal normal 9.5px 'Liberation Sans', sans-serif;color:#686868;transform:scaleX(0.9560);">* A single chord equal to, or greater than, the asteroid diameter, is taken</span>
<span class="t" style="left:796.00px;top:681px;font:normal normal 9.5px 'Liberation Sans', sans-serif;color:#686868;transform:scaleX(0.9566);">as being constrained to pass through the center of the asteroid.</span>
<span class="t" style="left:787.30px;top:707px;font:normal bold 12px 'Liberation Sans', sans-serif;color:#dc143c;letter-spacing:4.511px;">Set</span>
<span class="t" style="left:785.50px;top:720px;font:normal bold 12px 'Liberation Sans', sans-serif;color:#dc143c;letter-spacing:3.277px;">Soln</span>
<span class="t" style="left:852.00px;top:706px;font:normal normal 12px 'Liberation Sans', sans-serif;color:#000;transform:scaleX(0.9142);">#1</span>
<span class="t" style="left:917.00px;top:706px;font:normal normal 12px 'Liberation Sans', sans-serif;color:#0a960a;transform:scaleX(0.9142);">#2</span>
<span class="t" style="left:982.00px;top:706px;font:normal normal 12px 'Liberation Sans', sans-serif;color:#8b0000;transform:scaleX(0.9142);">#3</span>
<span class="t" style="left:1047.00px;top:706px;font:normal normal 12px 'Liberation Sans', sans-serif;color:#8b4513;transform:scaleX(0.9142);">#4</span>
<span class="t" style="left:828.80px;top:723px;font:normal normal 12px 'Liberation Sans', sans-serif;color:#101018;transform:scaleX(0.8738);">16.4, 296°</span>
<span class="t" style="left:893.00px;top:724px;font:normal normal 12px 'Liberation Sans', sans-serif;color:#101018;transform:scaleX(0.8137);">--, --°</span>
<span class="t" style="left:958.00px;top:724px;font:normal normal 12px 'Liberation Sans', sans-serif;color:#101018;transform:scaleX(0.8137);">--, --°</span>
<span class="t" style="left:1023.00px;top:724px;font:normal normal 12px 'Liberation Sans', sans-serif;color:#101018;transform:scaleX(0.8137);">--, --°</span>
<span class="t" style="left:847.60px;top:751px;font:normal bold 12px 'Liberation Sans', sans-serif;color:#dc143c;letter-spacing:3.990px;">Solve</span>
<span class="t" style="left:906.60px;top:751px;font:normal bold 12px 'Liberation Sans', sans-serif;color:#dc143c;letter-spacing:3.753px;">solution</span>
<span class="t" style="left:991.40px;top:751px;font:normal bold 12px 'Liberation Sans', sans-serif;color:#dc143c;letter-spacing:0.426px;">#1</span>
<span class="t" style="left:789.50px;top:765px;font:normal normal 12px 'Liberation Sans', sans-serif;color:#101018;transform:scaleX(0.8501);">Sepn (masec)</span>
<span class="t" style="left:945.00px;top:765px;font:normal normal 12px 'Liberation Sans', sans-serif;color:#101018;transform:scaleX(0.8995);">PA of 2nd</span>
<span class="t" style="left:796.50px;top:781px;font:normal normal 13px 'Liberation Sans', sans-serif;color:#0a0a30;transform:scaleX(0.7578);">16.4</span>
<span class="t" style="left:880.00px;top:783px;font:normal normal 12px 'Liberation Sans', sans-serif;color:#0a0a30;transform:scaleX(0.8232);">0.0</span>
<span class="t" style="left:942.50px;top:781px;font:normal normal 13px 'Liberation Sans', sans-serif;color:#0a0a30;transform:scaleX(0.7894);">296.0</span>
<span class="t" style="left:1027.00px;top:783px;font:normal normal 12px 'Liberation Sans', sans-serif;color:#0a0a30;transform:scaleX(0.8232);">0.0</span>
</body></html>
